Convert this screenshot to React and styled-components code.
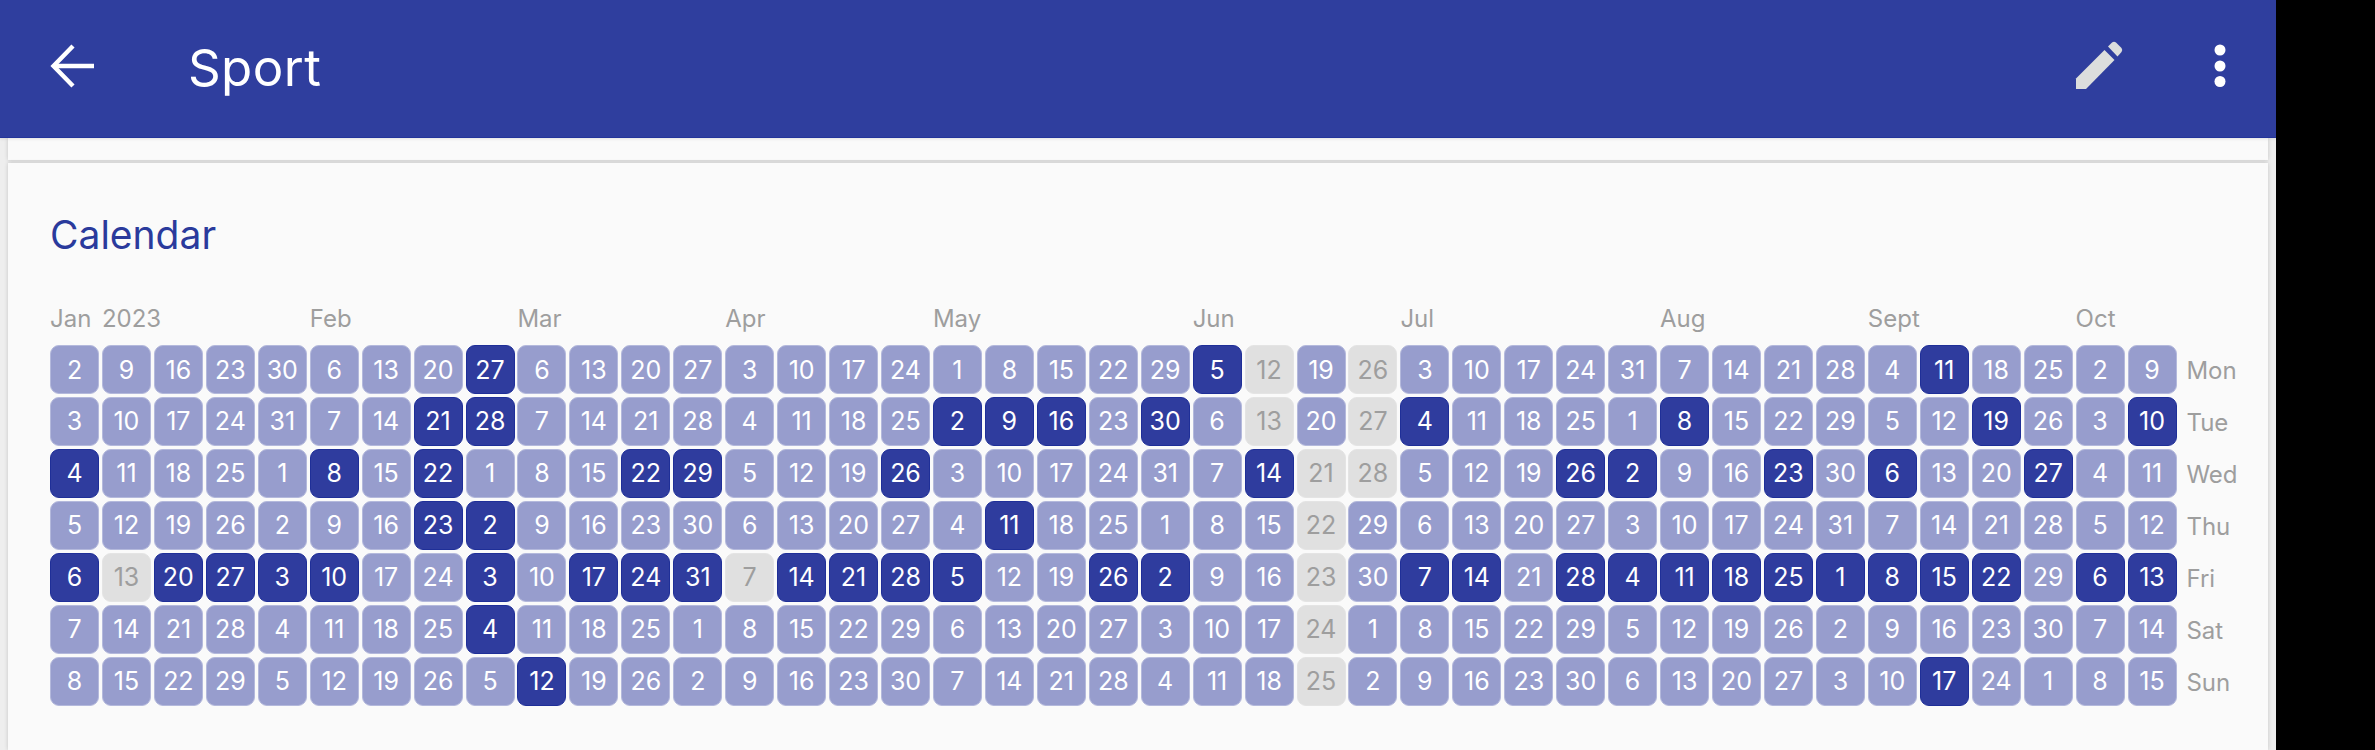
import React from 'react'
import styled, { createGlobalStyle, css } from 'styled-components'

const GlobalStyle = createGlobalStyle`
  html, body { margin: 0; padding: 0; background: #000; }
  body { font-family: Inter, "Open Sans", sans-serif; }
`

const Page = styled.div`
  width: 2375px;
  height: 750px;
  display: flex;
  background: #000;
  overflow: hidden;
`
const Phone = styled.div`
  width: 2276px;
  height: 750px;
  display: flex;
  flex-direction: column;
  background: #eeeeee;
`
const AppBar = styled.header`
  position: relative;
  z-index: 1;
  height: 137px;
  flex-shrink: 0;
  display: flex;
  align-items: center;
  background: #2f3e9e;
  border-bottom: 1px solid #23349a;
  box-shadow: 0 1px 3px rgba(0, 0, 0, 0.1);
  color: #fff;
`
const BackButton = styled.div`
  width: 188px;
  display: flex;
  align-items: center;
  padding: 0 0 6px 50px;
  box-sizing: border-box;
`
const Title = styled.h1`
  margin: 0 0 2px;
  font-size: 51px;
  font-weight: 400;
  letter-spacing: 0.4px;
`
const Actions = styled.div`
  margin-left: auto;
  display: flex;
  align-items: center;
  gap: 88.5px;
  padding: 0 50.5px 6px 0;
`
const Body = styled.main`
  flex: 1;
  display: flex;
  flex-direction: column;
  gap: 3px;
  padding: 0 8px;
`
const PrevCard = styled.div`
  height: 22px;
  flex-shrink: 0;
  background: #fafafa;
  box-shadow: 0 0 4px rgba(0, 0, 0, 0.18);
`
const Card = styled.section`
  flex: 1;
  background: #fafafa;
  box-shadow: 0 0 4px rgba(0, 0, 0, 0.18);
  padding: 48px 0 0 42px;
`
const CardTitle = styled.h2`
  margin: 0 0 45px;
  font-size: 39px;
  line-height: 48px;
  font-weight: 400;
  color: #2a3a9c;
`
const Grid = styled.div`
  display: grid;
  grid-template-columns: repeat(41, 49px) auto;
  grid-auto-rows: 49px;
  column-gap: 2.95px;
  row-gap: 2.95px;
`
const MonthRow = styled.div`
  display: grid;
  grid-template-columns: repeat(41, 49px);
  column-gap: 2.95px;
  height: 41px;
`
const Month = styled.span`
  font-size: 24px;
  line-height: 30px;
  color: #9e9e9e;
  white-space: nowrap;
  grid-column-start: ${p => p.$col + 1};
`
const stateStyles = {
  off: css`
    background: #979dcd;
    border-color: #b4b9dc;
    color: #fff;
  `,
  on: css`
    background: #2f3c9e;
    border-color: #1f2f98;
    color: #fff;
  `,
  empty: css`
    background: #e0e0e0;
    border-color: #e4e4e4;
    color: #9e9e9e;
  `,
}
const Cell = styled.div`
  box-sizing: border-box;
  display: flex;
  align-items: center;
  justify-content: center;
  border: 1px solid;
  border-radius: 9px;
  font-size: 25px;
  ${p => stateStyles[p.$state]}
`
const Weekday = styled.div`
  display: flex;
  align-items: center;
  padding: 2px 0 0 7px;
  font-size: 24px;
  color: #9e9e9e;
`

const MONTHS = [
  ['Jan', 0], ['2023', 1], ['Feb', 5], ['Mar', 9], ['Apr', 13], ['May', 17],
  ['Jun', 22], ['Jul', 26], ['Aug', 31], ['Sept', 35], ['Oct', 39],
]

// * = done, g = outside of the habit range
const ROWS = [
  ['Mon', '2 9 16 23 30 6 13 20 27* 6 13 20 27 3 10 17 24 1 8 15 22 29 5* 12g 19 26g 3 10 17 24 31 7 14 21 28 4 11* 18 25 2 9'],
  ['Tue', '3 10 17 24 31 7 14 21* 28* 7 14 21 28 4 11 18 25 2* 9* 16* 23 30* 6 13g 20 27g 4* 11 18 25 1 8* 15 22 29 5 12 19* 26 3 10*'],
  ['Wed', '4* 11 18 25 1 8* 15 22* 1 8 15 22* 29* 5 12 19 26* 3 10 17 24 31 7 14* 21g 28g 5 12 19 26* 2* 9 16 23* 30 6* 13 20 27* 4 11'],
  ['Thu', '5 12 19 26 2 9 16 23* 2* 9 16 23 30 6 13 20 27 4 11* 18 25 1 8 15 22g 29 6 13 20 27 3 10 17 24 31 7 14 21 28 5 12'],
  ['Fri', '6* 13g 20* 27* 3* 10* 17 24 3* 10 17* 24* 31* 7g 14* 21* 28* 5* 12 19 26* 2* 9 16 23g 30 7* 14* 21 28* 4* 11* 18* 25* 1* 8* 15* 22* 29 6* 13*'],
  ['Sat', '7 14 21 28 4 11 18 25 4* 11 18 25 1 8 15 22 29 6 13 20 27 3 10 17 24g 1 8 15 22 29 5 12 19 26 2 9 16 23 30 7 14'],
  ['Sun', '8 15 22 29 5 12 19 26 5 12* 19 26 2 9 16 23 30 7 14 21 28 4 11 18 25g 2 9 16 23 30 6 13 20 27 3 10 17* 24 1 8 15'],
]

const parseCell = token => {
  const last = token[token.length - 1]
  if (last === '*') return { day: token.slice(0, -1), state: 'on' }
  if (last === 'g') return { day: token.slice(0, -1), state: 'empty' }
  return { day: token, state: 'off' }
}

const BackIcon = () => (
  <svg width="44" height="44" viewBox="0 0 44 44" fill="none" stroke="#fff" strokeWidth="4.4">
    <path d="M3 22 H44" />
    <path d="M23 2 L3.500 22 L23 42" />
  </svg>
)

const PencilIcon = () => (
  <svg width="50" height="52" viewBox="0 0 50 52" fill="#dcdedd">
    <path d="M1 49 V38.500 L29.500 10 L39.500 20 L11 49 Z" />
    <path d="M33 6.500 L37 2.500 Q39 0.800 41 2.500 L46.500 8 Q48 10 46.500 12 L42.500 16.500 Z" />
  </svg>
)

const MoreIcon = () => (
  <svg width="12" height="44" viewBox="0 0 12 44" fill="#fff">
    <circle cx="6" cy="6" r="5.500" />
    <circle cx="6" cy="22" r="5.500" />
    <circle cx="6" cy="37.500" r="5.500" />
  </svg>
)

export default function App() {
  return (
    <Page>
      <GlobalStyle />
      <Phone>
        <AppBar>
          <BackButton><BackIcon /></BackButton>
          <Title>Sport</Title>
          <Actions>
            <PencilIcon />
            <MoreIcon />
          </Actions>
        </AppBar>
        <Body>
          <PrevCard />
          <Card>
            <CardTitle>Calendar</CardTitle>
            <MonthRow>
              {MONTHS.map(([label, col]) => (
                <Month key={label} $col={col}>{label}</Month>
              ))}
            </MonthRow>
            <Grid>
              {ROWS.map(([weekday, days]) => (
                <React.Fragment key={weekday}>
                  {days.split(' ').map(parseCell).map((cell, i) => (
                    <Cell key={i} $state={cell.state}>{cell.day}</Cell>
                  ))}
                  <Weekday>{weekday}</Weekday>
                </React.Fragment>
              ))}
            </Grid>
          </Card>
        </Body>
      </Phone>
    </Page>
  )
}
